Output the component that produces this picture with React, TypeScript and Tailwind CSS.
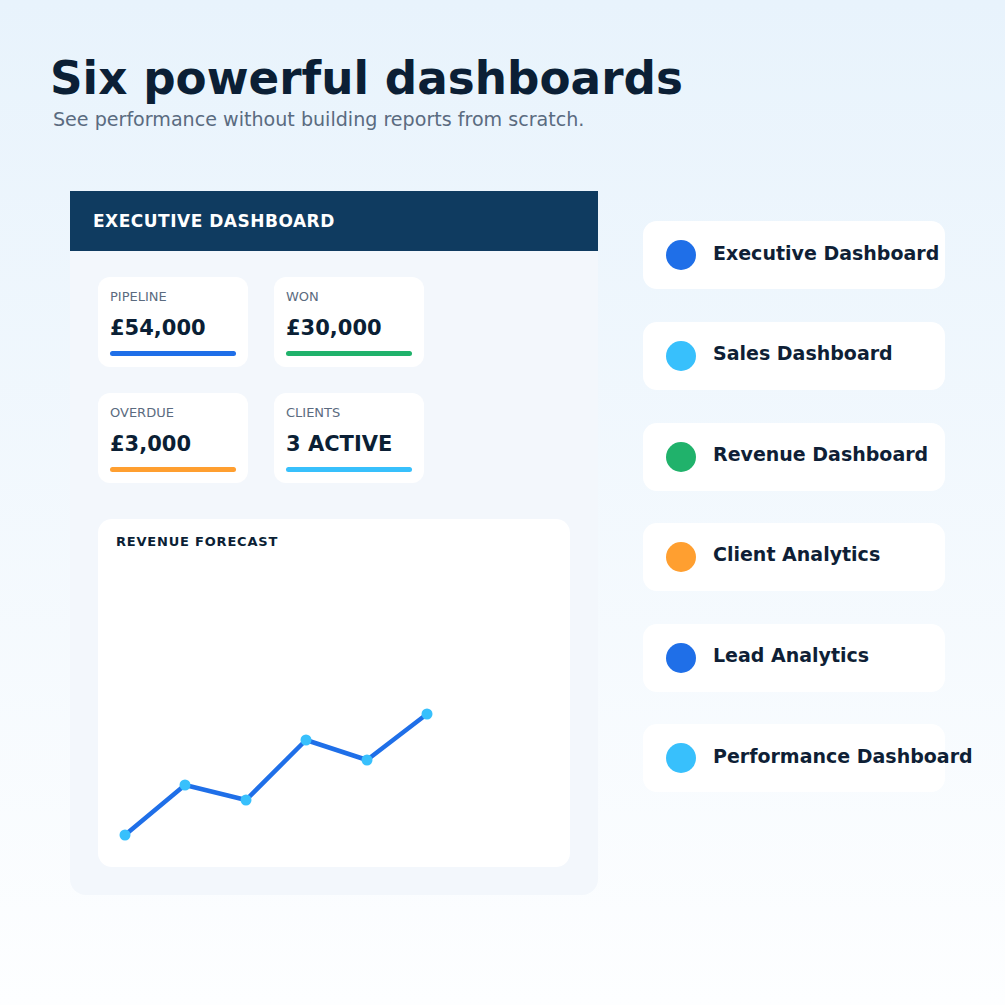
const stats = [
  { label: "PIPELINE", value: "£54,000", bar: "bg-[#1f6fe8]" },
  { label: "WON", value: "£30,000", bar: "bg-[#20b26b]" },
  { label: "OVERDUE", value: "£3,000", bar: "bg-[#ff9f30]" },
  { label: "CLIENTS", value: "3 ACTIVE", bar: "bg-[#38c0fc]" },
];

const boards = [
  { name: "Executive Dashboard", dot: "bg-[#1f6fe8]" },
  { name: "Sales Dashboard", dot: "bg-[#38c0fc]" },
  { name: "Revenue Dashboard", dot: "bg-[#20b26b]" },
  { name: "Client Analytics", dot: "bg-[#ff9f30]" },
  { name: "Lead Analytics", dot: "bg-[#1f6fe8]" },
  { name: "Performance Dashboard", dot: "bg-[#38c0fc]" },
];

// chart points, relative to the svg box under the card title
const points = [
  [27, 284],
  [87, 234],
  [148, 249],
  [208, 189],
  [269, 209],
  [329, 163],
];

function StatCard({ label, value, bar }: { label: string; value: string; bar: string }) {
  return (
    <div className="rounded-[12px] bg-white px-[12px] pt-[12px] pb-[11px]">
      <div className="text-[13px] leading-[16px] text-[#5b6b80]">{label}</div>
      <div className="mt-[10px] text-[21px] font-bold leading-[26px] text-[#0b1f35]">{value}</div>
      <div className={`mt-[10px] h-[5px] w-full rounded-full ${bar}`} />
    </div>
  );
}

export default function App() {
  return (
    <div
      className="h-[1005px] w-[1005px] overflow-hidden bg-gradient-to-b from-[#e8f3fc] to-[#fdfeff] pl-[50px] pt-[56px]"
      style={{ fontFamily: '"DejaVu Sans", "Liberation Sans", sans-serif' }}
    >
      <h1 className="text-[45.3px] font-bold leading-none text-[#0b1f35]">Six powerful dashboards</h1>
      <p className="mt-[9px] pl-[3px] text-[19.1px] leading-none text-[#5a6b80]">
        See performance without building reports from scratch.
      </p>

      <div className="mt-[62px] ml-[20px] flex gap-[45px]">
        <section className="w-[528px]">
          <div className="flex h-[60px] items-center bg-[#0f3b60] px-[23px]">
            <span className="text-[17px] font-bold tracking-[0.5px] text-white">EXECUTIVE DASHBOARD</span>
          </div>
          <div className="rounded-b-[16px] bg-[#f3f7fc] px-[28px] pt-[26px] pb-[28px]">
            <div className="grid w-[326px] grid-cols-2 gap-[26px]">
              {stats.map((s) => (
                <StatCard key={s.label} {...s} />
              ))}
            </div>
            <div className="mt-[36px] flex h-[348px] w-[472px] flex-col rounded-[14px] bg-white">
              <div className="h-[32px] pl-[18px] pt-[15px] text-[13px] font-bold leading-[16px] tracking-[0.8px] text-[#0b1f35]">
                REVENUE FORECAST
              </div>
              <svg width="472" height="316" viewBox="0 0 472 316">
                <polyline
                  points={points.map((p) => p.join(",")).join(" ")}
                  fill="none"
                  stroke="#1f6fe8"
                  strokeWidth="4.5"
                  strokeLinejoin="round"
                />
                {points.map(([x, y], i) => (
                  <circle key={i} cx={x} cy={y} r="5.5" fill="#38c0fc" />
                ))}
              </svg>
            </div>
          </div>
        </section>

        <div className="flex flex-col gap-[32.6px] pt-[30px]">
          {boards.map((b) => (
            <div key={b.name} className="flex h-[68px] w-[302px] items-center gap-[17px] rounded-[14px] bg-white pl-[23px]">
              <span className={`h-[30px] w-[30px] shrink-0 rounded-full ${b.dot}`} />
              <span className="-mt-[5px] whitespace-nowrap text-[19px] font-bold text-[#0f1f36]">{b.name}</span>
            </div>
          ))}
        </div>
      </div>
    </div>
  );
}
